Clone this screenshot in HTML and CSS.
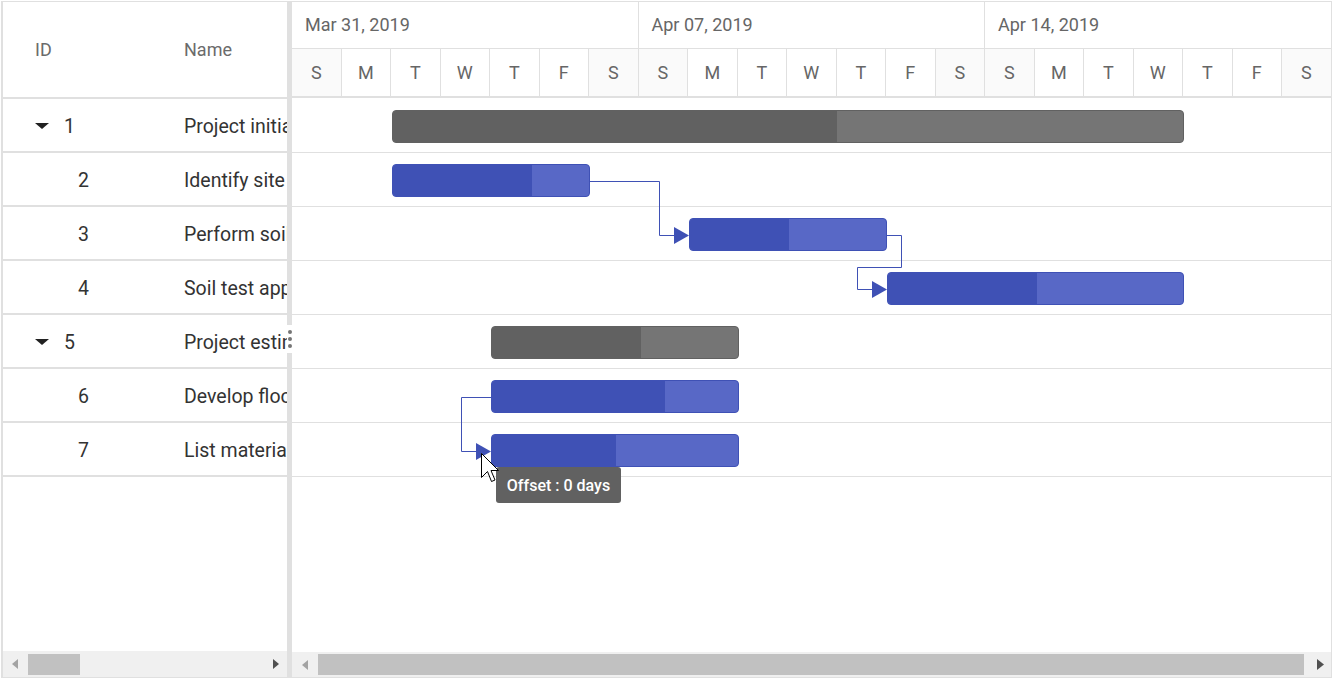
FILE: index.html
```html
<!DOCTYPE html>
<html lang="en">
<head>
<meta charset="utf-8">
<title>Gantt</title>
<link rel="stylesheet" href="styles.css">
</head>
<body>
<div class="gantt">
  <div class="grid-pane">
    <div class="grid-header">
      <div class="col-id">ID</div>
      <div class="col-name">Name</div>
    </div>
    <div class="grid-body">
      <div class="grid-row parent-row">
        <div class="col-id"><span class="toggle"></span>1</div>
        <div class="col-name">Project initiation</div>
      </div>
      <div class="grid-row child">
        <div class="col-id">2</div>
        <div class="col-name">Identify site location</div>
      </div>
      <div class="grid-row child">
        <div class="col-id">3</div>
        <div class="col-name">Perform soil test</div>
      </div>
      <div class="grid-row child">
        <div class="col-id">4</div>
        <div class="col-name">Soil test approval</div>
      </div>
      <div class="grid-row parent-row">
        <div class="col-id"><span class="toggle"></span>5</div>
        <div class="col-name">Project estimation</div>
      </div>
      <div class="grid-row child">
        <div class="col-id">6</div>
        <div class="col-name">Develop floor plan for estimation</div>
      </div>
      <div class="grid-row child">
        <div class="col-id">7</div>
        <div class="col-name">List materials</div>
      </div>
    </div>
    <div class="scrollbar grid-scroll">
      <div class="sb-btn sb-left"><svg width="6" height="10" viewBox="0 0 6 10"><polygon points="6,0 0,5 6,10" class="arrow-off"/></svg></div>
      <div class="sb-track"><div class="sb-thumb" style="margin-left:1px;width:52px"></div></div>
      <div class="sb-btn sb-right"><svg width="6" height="10" viewBox="0 0 6 10"><polygon points="0,0 6,5 0,10" class="arrow-on"/></svg></div>
    </div>
  </div>

  <div class="splitter">
    <div class="resizer"><i></i><i></i><i></i></div>
  </div>

  <div class="chart-pane">
    <div class="timeline">
      <div class="tier tier-top">
        <div class="week">Mar 31, 2019</div>
        <div class="week">Apr 07, 2019</div>
        <div class="week">Apr 14, 2019</div>
      </div>
      <div class="tier tier-bottom">
        <div class="day weekend">S</div><div class="day">M</div><div class="day">T</div><div class="day">W</div><div class="day">T</div><div class="day">F</div><div class="day weekend">S</div>
        <div class="day weekend">S</div><div class="day">M</div><div class="day">T</div><div class="day">W</div><div class="day">T</div><div class="day">F</div><div class="day weekend">S</div>
        <div class="day weekend">S</div><div class="day">M</div><div class="day">T</div><div class="day">W</div><div class="day">T</div><div class="day">F</div><div class="day weekend">S</div>
      </div>
    </div>
    <div class="chart-body">
      <div class="chart-row"><div class="bar parent" style="left:100px;width:792px"><div class="progress" style="width:444px"></div></div></div>
      <div class="chart-row"><div class="bar" style="left:100px;width:198px"><div class="progress" style="width:139px"></div></div></div>
      <div class="chart-row"><div class="bar" style="left:397px;width:198px"><div class="progress" style="width:99px"></div></div></div>
      <div class="chart-row"><div class="bar" style="left:595px;width:297px"><div class="progress" style="width:149px"></div></div></div>
      <div class="chart-row"><div class="bar parent" style="left:199px;width:248px"><div class="progress" style="width:149px"></div></div></div>
      <div class="chart-row"><div class="bar" style="left:199px;width:248px"><div class="progress" style="width:173px"></div></div></div>
      <div class="chart-row"><div class="bar" style="left:199px;width:248px"><div class="progress" style="width:124px"></div></div></div>

      <svg class="connectors" width="1039" height="553" viewBox="0 0 1039 553">
        <path d="M297.5,83.5 H367.5 V137.5 H383"/>
        <polygon points="382,129 397,137.5 382,146"/>
        <path d="M595,137.5 H609.5 V169.5 H565.5 V191.5 H581"/>
        <polygon points="580,183 595,191.5 580,200"/>
        <path d="M199,299.5 H169.5 V353.5 H185"/>
        <polygon points="184,345 199,353.5 184,362"/>
      </svg>

      <div class="tooltip">Offset : 0 days</div>

      <svg class="cursor" width="20" height="30" viewBox="0 0 20 30">
        <path d="M0.5,0.5 L0.5,24.5 L6.5,18.5 L10.5,28.5 L14,27 L10,17.5 L17.5,17.5 Z"/>
      </svg>
    </div>
    <div class="scrollbar chart-scroll">
      <div class="sb-btn sb-left"><svg width="6" height="10" viewBox="0 0 6 10"><polygon points="6,0 0,5 6,10" class="arrow-off"/></svg></div>
      <div class="sb-track"><div class="sb-thumb" style="margin-left:0;width:986px"></div></div>
      <div class="sb-btn sb-right"><svg width="7" height="11" viewBox="0 0 7 11"><polygon points="0,0 7,5.5 0,11" class="arrow-on"/></svg></div>
    </div>
  </div>
</div>
</body>
</html>
```

FILE: styles.css
```css
* {
  box-sizing: border-box;
}

html,
body {
  margin: 0;
  padding: 0;
  background: #ffffff;
}

body {
  padding: 1px 0 0 1px;
  font-family: Roboto, "Liberation Sans", sans-serif;
}

.gantt {
  width: 1331px;
  height: 677px;
  border: 1px solid #e0e0e0;
  border-left-width: 2px;
  display: flex;
  overflow: hidden;
  position: relative;
}

/* ---------- grid pane ---------- */
.grid-pane {
  width: 284px;
  flex: none;
  display: flex;
  flex-direction: column;
  overflow: hidden;
}

.grid-header {
  height: 97px;
  flex: none;
  display: flex;
  align-items: center;
  padding-bottom: 1px;
  border-bottom: 2px solid #e0e0e0;
  color: #6b6b6b;
  font-size: 18px;
}

.col-id {
  width: 150px;
  flex: none;
  padding-left: 32px;
  display: flex;
  align-items: center;
  white-space: nowrap;
}

.col-name {
  flex: none;
  padding-left: 31px;
  white-space: nowrap;
}

.grid-body {
  flex: 1;
}

.grid-row {
  height: 54px;
  display: flex;
  align-items: center;
  padding-top: 3px;
  border-bottom: 2px solid #e0e0e0;
  font-size: 19.5px;
  color: #333333;
}

.grid-row.child .col-id {
  padding-left: 75px;
}

.toggle {
  width: 29px;
  height: 7px;
  flex: none;
  display: flex;
  align-items: flex-start;
}

.toggle::before {
  content: "";
  width: 0;
  height: 0;
  border-left: 7px solid transparent;
  border-right: 7px solid transparent;
  border-top: 6px solid #212121;
}

/* ---------- scrollbars ---------- */
.scrollbar {
  flex: none;
  display: flex;
  align-items: center;
  background: #f0f0f0;
}

.grid-scroll {
  height: 26px;
}

.chart-scroll {
  height: 25px;
}

.sb-btn {
  height: 100%;
  flex: none;
  display: flex;
  align-items: center;
  justify-content: center;
}

.grid-scroll .sb-left {
  width: 24px;
}

.grid-scroll .sb-right {
  width: 22px;
}

.chart-scroll .sb-left {
  width: 26px;
}

.chart-scroll .sb-right {
  width: 21px;
}

.sb-btn svg {
  display: block;
}

.arrow-off {
  fill: #a3a3a3;
}

.arrow-on {
  fill: #505050;
}

.sb-track {
  flex: 1;
  height: 21px;
  display: flex;
}

.sb-thumb {
  height: 100%;
  background: #c1c1c1;
}

/* ---------- splitter ---------- */
.splitter {
  width: 5px;
  flex: none;
  background: #e0e0e0;
  position: relative;
}

.resizer {
  position: absolute;
  left: 0;
  top: 323px;
  width: 6px;
  height: 28px;
  background: #ffffff;
  z-index: 2;
}

.resizer i {
  position: absolute;
  left: 0.5px;
  width: 4px;
  height: 4px;
  border-radius: 50%;
  background: #757575;
}

.resizer i:nth-child(1) {
  top: 5px;
}

.resizer i:nth-child(2) {
  top: 12px;
}

.resizer i:nth-child(3) {
  top: 19px;
}

/* ---------- chart pane ---------- */
.chart-pane {
  flex: 1;
  min-width: 0;
  display: flex;
  flex-direction: column;
  overflow: hidden;
}

.timeline {
  height: 96px;
  flex: none;
}

.tier {
  display: grid;
  color: #666666;
  font-size: 18px;
}

.tier-top {
  height: 47px;
  grid-template-columns: repeat(3, 346.5px);
  border-bottom: 1px solid #e0e0e0;
}

.week {
  display: flex;
  align-items: center;
  padding-left: 13px;
  padding-bottom: 2px;
  border-right: 1px solid #e0e0e0;
  white-space: nowrap;
}

.tier-bottom {
  height: 49px;
  grid-template-columns: repeat(21, 49.5px);
  border-bottom: 2px solid #e0e0e0;
}

.day {
  display: flex;
  align-items: center;
  justify-content: center;
  border-right: 1px solid #e0e0e0;
}

.day.weekend {
  background: #fafafa;
}

.chart-body {
  flex: 1;
  position: relative;
  padding-top: 1px;
}

.chart-row {
  height: 54px;
  position: relative;
  border-bottom: 1px solid #e0e0e0;
}

.bar {
  position: absolute;
  top: 11px;
  height: 33px;
  border: 1px solid #3f51b5;
  border-radius: 4px;
  background: #5868c6;
  overflow: hidden;
}

.bar .progress {
  height: 100%;
  background: #3f51b5;
}

.bar.parent {
  border-color: #616161;
  background: #757575;
}

.bar.parent .progress {
  background: #616161;
}

.connectors {
  position: absolute;
  left: 0;
  top: 0;
}

.connectors path {
  fill: none;
  stroke: #3f51b5;
  stroke-width: 1;
}

.connectors polygon {
  fill: #3f51b5;
}

.tooltip {
  position: absolute;
  left: 204px;
  top: 369px;
  width: 125px;
  height: 36px;
  border-radius: 3px;
  background: #616161;
  color: #ffffff;
  font-size: 16px;
  font-weight: 500;
  display: flex;
  align-items: center;
  justify-content: center;
  white-space: nowrap;
}

.cursor {
  position: absolute;
  left: 189px;
  top: 355px;
  z-index: 3;
}

.cursor path {
  fill: #ffffff;
  stroke: #000000;
  stroke-width: 1;
}
```
